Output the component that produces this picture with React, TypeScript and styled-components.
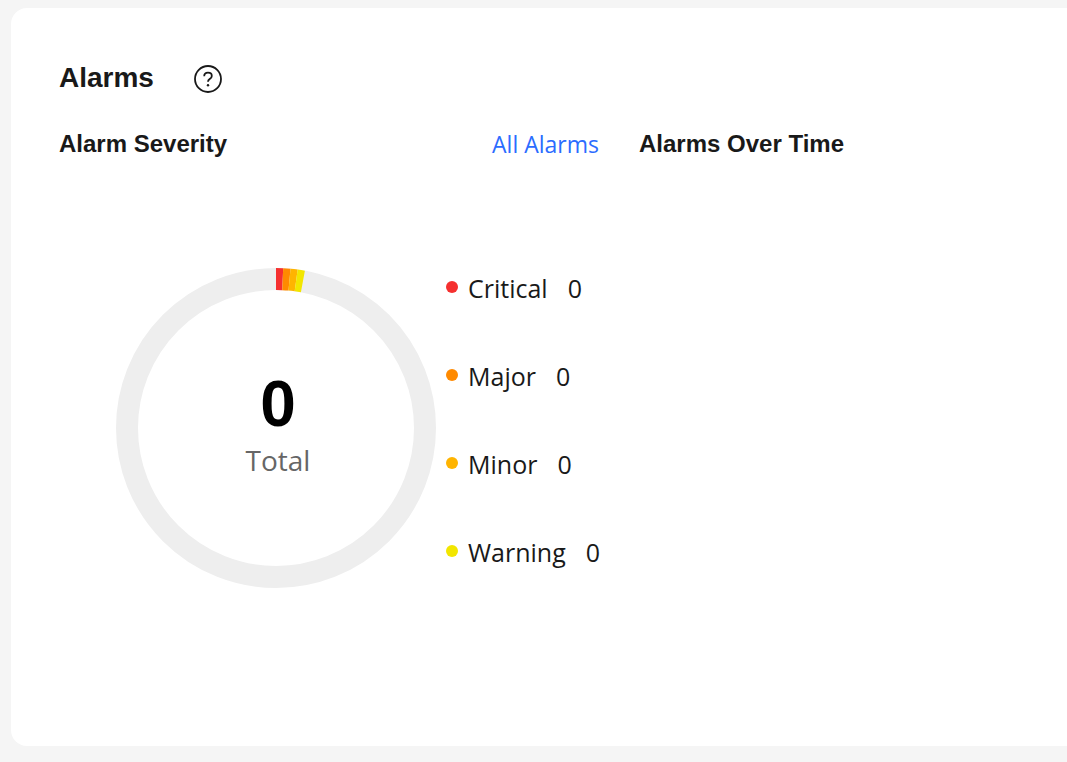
import React from 'react';
import styled, { createGlobalStyle } from 'styled-components';

const GlobalStyle = createGlobalStyle`
  html, body {
    margin: 0;
    height: 100%;
    overflow: hidden;
    background: #f5f5f5;
  }
`;

const Page = styled.main`
  height: 762px;
  padding: 8px 0 16px 11px;
  box-sizing: border-box;
  overflow: hidden;
`;

const Card = styled.section`
  width: 1200px;
  height: 738px;
  box-sizing: border-box;
  padding: 48px 0 0 48px;
  background: #fff;
  border-radius: 16px;
  color: #191919;
  font-family: 'Liberation Sans', Arial, sans-serif;
`;

const TitleRow = styled.header`
  display: flex;
  align-items: center;
  gap: 39px;
  height: 44px;
`;

const Title = styled.h2`
  margin: 0;
  font-size: 28px;
  line-height: 40px;
  font-weight: 700;
`;

const HelpIcon = styled.svg`
  width: 30px;
  height: 30px;
  margin-top: 2px;
`;

const Columns = styled.div`
  display: grid;
  grid-template-columns: 540px 1fr;
  column-gap: 40px;
  margin-top: 22px;
`;

const SectionHead = styled.div`
  display: flex;
  align-items: center;
  justify-content: space-between;
  height: 44px;
`;

const SectionTitle = styled.h3`
  margin: 0;
  font-size: 24px;
  line-height: 32px;
  font-weight: 700;
`;

const AllLink = styled.a`
  font-family: 'Open Sans', sans-serif;
  font-size: 23px;
  line-height: 32px;
  color: #2b6cff;
  text-decoration: none;
  cursor: pointer;
`;

const ChartArea = styled.div`
  display: flex;
  align-items: flex-start;
  margin: 102px 0 0 57px;
`;

const Donut = styled.div`
  position: relative;
  width: 320px;
  height: 320px;
  flex: none;
`;

const DonutCenter = styled.div`
  position: absolute;
  top: 100px;
  left: 4px;
  right: 0;
  text-align: center;
`;

const TotalValue = styled.div`
  font-size: 64px;
  line-height: 72px;
  font-weight: 700;
  color: #000;
`;

const TotalLabel = styled.div`
  font-family: 'Open Sans', sans-serif;
  font-size: 28px;
  line-height: 40px;
  color: #666;
`;

const Legend = styled.ul`
  list-style: none;
  margin: 0 0 0 10px;
  padding: 0;
  display: flex;
  flex-direction: column;
  gap: 48px;
`;

const LegendItem = styled.li`
  display: flex;
  align-items: center;
  height: 40px;
  font-family: 'Open Sans', sans-serif;
  font-size: 25px;
  color: #191919;
`;

const Dot = styled.span<{ $color: string }>`
  width: 12px;
  height: 12px;
  margin: -2px 10px 0 0;
  border-radius: 50%;
  background: ${({ $color }) => $color};
`;

const Count = styled.span`
  margin-left: 20px;
`;

const severities = [
  { name: 'Critical', color: '#f5302f', count: 0 },
  { name: 'Major', color: '#ff8a00', count: 0 },
  { name: 'Minor', color: '#ffb400', count: 0 },
  { name: 'Warning', color: '#f2e600', count: 0 },
];

const R = 149;
const CIRC = 2 * Math.PI * R;
const SEG = (2.6 / 360) * CIRC;

export default function App() {
  return (
    <Page>
      <GlobalStyle />
      <Card>
        <TitleRow>
          <Title>Alarms</Title>
          <HelpIcon viewBox="0 0 30 30" fill="none">
            <circle cx="15" cy="15" r="13" stroke="#191919" strokeWidth="1.8" />
            <path
              d="M11.2 12.2c0-2.2 1.7-3.6 3.8-3.6s3.8 1.3 3.8 3.3c0 1.6-1 2.4-2.1 3.2-1 .7-1.7 1.3-1.7 2.7"
              stroke="#191919"
              strokeWidth="1.8"
            />
            <circle cx="15" cy="21.2" r="1.2" fill="#191919" />
          </HelpIcon>
        </TitleRow>
        <Columns>
          <div>
            <SectionHead>
              <SectionTitle>Alarm Severity</SectionTitle>
              <AllLink>All Alarms</AllLink>
            </SectionHead>
            <ChartArea>
              <Donut>
                <svg width="320" height="320" viewBox="0 0 320 320">
                  <circle cx="160" cy="160" r={R} fill="none" stroke="#eeeeee" strokeWidth="22" />
                  <g transform="rotate(-90 160 160)">
                    {severities.map((s, i) => (
                      <circle
                        key={s.name}
                        cx="160"
                        cy="160"
                        r={R}
                        fill="none"
                        stroke={s.color}
                        strokeWidth="22"
                        strokeDasharray={`${SEG} ${CIRC - SEG}`}
                        strokeDashoffset={-i * SEG}
                      />
                    ))}
                  </g>
                </svg>
                <DonutCenter>
                  <TotalValue>0</TotalValue>
                  <TotalLabel>Total</TotalLabel>
                </DonutCenter>
              </Donut>
              <Legend>
                {severities.map((s) => (
                  <LegendItem key={s.name}>
                    <Dot $color={s.color} />
                    {s.name}
                    <Count>{s.count}</Count>
                  </LegendItem>
                ))}
              </Legend>
            </ChartArea>
          </div>
          <SectionHead>
            <SectionTitle>Alarms Over Time</SectionTitle>
          </SectionHead>
        </Columns>
      </Card>
    </Page>
  );
}
